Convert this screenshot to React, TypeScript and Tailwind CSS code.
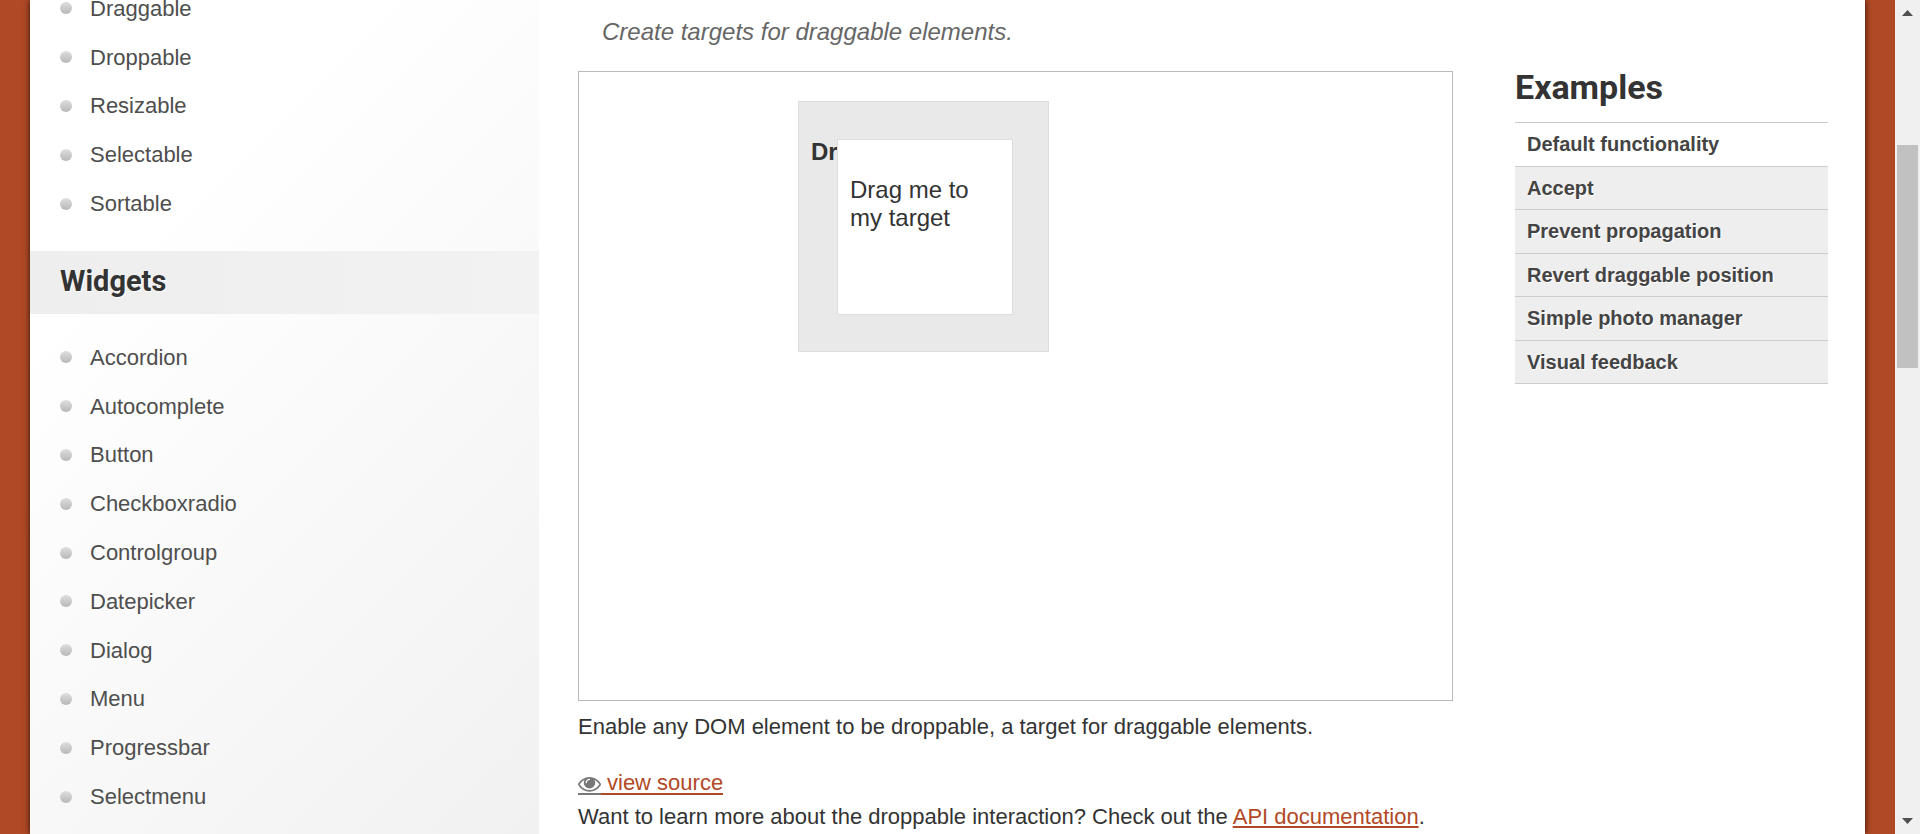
const interactions = ["Draggable", "Droppable", "Resizable", "Selectable", "Sortable"];

const widgets = [
  "Accordion",
  "Autocomplete",
  "Button",
  "Checkboxradio",
  "Controlgroup",
  "Datepicker",
  "Dialog",
  "Menu",
  "Progressbar",
  "Selectmenu",
];

const examples = [
  "Default functionality",
  "Accept",
  "Prevent propagation",
  "Revert draggable position",
  "Simple photo manager",
  "Visual feedback",
];

function NavItem({ label }: { label: string }) {
  return (
    <li className="flex items-center gap-[18px] pl-[30px]">
      <span className="size-3 rounded-full bg-linear-to-b from-[#dedede] to-[#b8b8b8]" />
      <a href="#" className="text-[#4e4e4e]">
        {label}
      </a>
    </li>
  );
}

function EyeIcon() {
  return (
    <svg viewBox="0 0 1792 1792" fill="currentColor" className="size-[23px]" aria-hidden="true">
      <path d="M1664 960q-152-236-381-353 61 104 61 225 0 185-131.5 316.5t-316.5 131.5-316.5-131.5-131.5-316.5q0-121 61-225-229 117-381 353 133 205 333.5 326.5t434.5 121.5 434.5-121.5 333.5-326.5zm-720-384q0-20-14-34t-34-14q-125 0-214.5 89.5t-89.5 214.5q0 20 14 34t34 14 34-14 14-34q0-86 61-147t147-61q20 0 34-14t14-34zm848 384q0 34-20 69-140 230-376.5 368.5t-499.5 138.5-499.5-139-376.5-368q-20-35-20-69t20-69q140-229 376.5-368t499.5-139 499.5 139 376.5 368q20 35 20 69z" />
    </svg>
  );
}

function Sidebar() {
  return (
    <nav className="w-[509px] shrink-0 bg-linear-135 from-white from-25% to-[#f1f1f1]">
      <ul className="-mt-4 grid h-[244px] auto-rows-fr">
        {interactions.map((label) => (
          <NavItem key={label} label={label} />
        ))}
      </ul>
      <h3 className="mt-[23px] mb-[19px] flex h-[63px] items-center bg-linear-to-r from-[#eeeeee] to-[#f2f2f2] pb-[2px] pl-[30px] font-[Roboto,sans-serif] text-[29px] font-bold text-[#333] text-shadow-[1px_1px_0_#fff]">
        Widgets
      </h3>
      <ul className="grid h-[488px] auto-rows-fr">
        {widgets.map((label) => (
          <NavItem key={label} label={label} />
        ))}
      </ul>
    </nav>
  );
}

function Demo() {
  return (
    <div className="relative h-[630px] border border-[#bbb] text-[24px] leading-7 text-[#333]">
      <div className="absolute top-[29px] left-[219px] size-[251px] border border-[#ddd] bg-[#e9e9e9] px-3 pt-9 font-bold">
        <p>Drop here</p>
      </div>
      <div className="absolute top-[67px] left-[258px] size-44 border border-[#ddd] bg-white px-3 pt-9">
        <p>Drag me to my target</p>
      </div>
    </div>
  );
}

function Examples() {
  return (
    <aside className="w-[313px] shrink-0 pt-[65px]">
      <h2 className="font-[Roboto,sans-serif] text-[34px] leading-11 font-bold text-[#333]">Examples</h2>
      <ul className="mt-[13px] grid h-[262px] auto-rows-fr border-t border-[#ccc] text-[20px] font-bold">
        {examples.map((item, index) => (
          <li
            key={item}
            className={
              index === 0
                ? "flex items-center border-b border-[#ccc] pl-3"
                : "flex items-center border-b border-[#ccc] bg-[#eee] pl-3 text-shadow-[1px_1px_0_#fff]"
            }
          >
            <a href="#" className="text-[#444]">
              {item}
            </a>
          </li>
        ))}
      </ul>
    </aside>
  );
}

function ScrollBar() {
  return (
    <div className="flex w-[25px] shrink-0 flex-col items-center bg-[#f0f0f0] py-[10px]" aria-hidden="true">
      <svg viewBox="0 0 11 6" className="h-[6px] w-[11px] fill-[#505050]">
        <path d="M0 6 5.500 0 11 6z" />
      </svg>
      <div className="mt-[129px] mb-auto h-[223px] w-[21px] bg-[#c1c1c1]" />
      <svg viewBox="0 0 11 6" className="h-[6px] w-[11px] fill-[#505050]">
        <path d="M0 0 5.500 6 11 0z" />
      </svg>
    </div>
  );
}

export default function App() {
  return (
    <div className="flex h-screen overflow-hidden bg-[#b04926] font-['Liberation_Sans',Arial,sans-serif] text-[22px] text-[#333]">
      <div className="flex flex-1 px-[30px]">
        <div className="flex flex-1 bg-white shadow-[0_0_6px_rgba(0,0,0,0.8)]">
          <Sidebar />
          <main className="mr-[62px] ml-[39px] min-w-0 flex-1 pt-4">
            <p className="mb-[23px] pl-6 text-[24px] leading-8 text-[#666] italic">
              Create targets for draggable elements.
            </p>
            <Demo />
            <p className="mt-[10px] leading-8">
              Enable any DOM element to be droppable, a target for draggable elements.
            </p>
            <div className="mt-7 flex leading-[24px]">
              <a href="#" className="flex h-6 text-[#b24926]">
                <span className="flex items-center border-b-2 border-[#777] pt-[2px] text-[#777]">
                  <EyeIcon />
                </span>
                <span className="border-b-2 border-[#b24926] pl-[6px]">view source</span>
              </a>
            </div>
            <p className="mt-[6px] leading-8 whitespace-nowrap">
              Want to learn more about the droppable interaction? Check out the{" "}
              <a href="#" className="text-[#b24926] underline decoration-2 underline-offset-2">
                API documentation
              </a>
              .
            </p>
          </main>
          <Examples />
          <div className="w-[37px] shrink-0" />
        </div>
      </div>
      <ScrollBar />
    </div>
  );
}
